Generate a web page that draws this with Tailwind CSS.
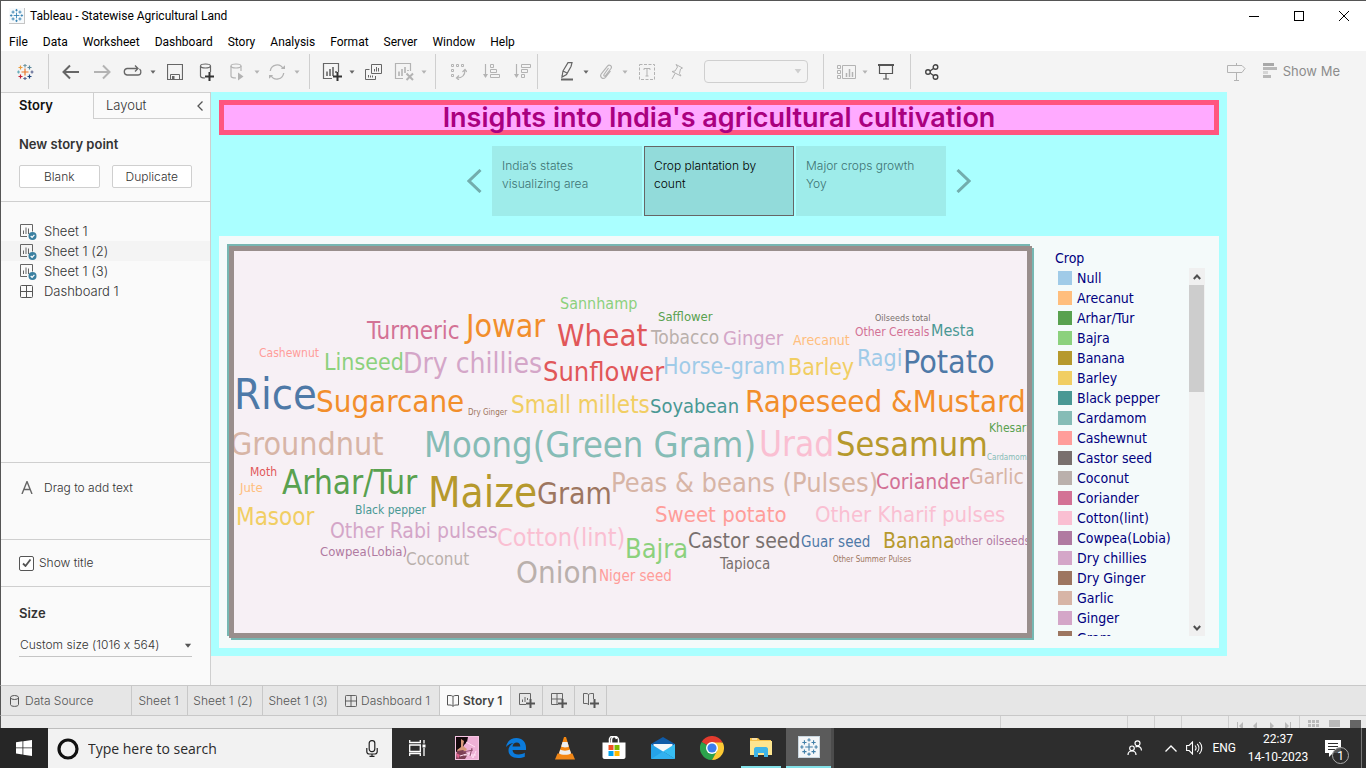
<!DOCTYPE html>
<html lang="en">
<head>
<meta charset="utf-8">
<meta name="viewport" content="width=device-width, initial-scale=1">
<title>Tableau - Statewise Agricultural Land</title>
<script src="https://cdn.jsdelivr.net/npm/@tailwindcss/browser@4"></script>
</head>
<body class="flex h-screen flex-col overflow-hidden bg-[#f4f4f4] font-[Inter,'Liberation_Sans',sans-serif] text-xs font-light text-[#333] [font-feature-settings:'calt'_0]">

<svg class="hidden">
  <defs>
    <g id="plus9"><path d="M3.500 0h2v3.500h3.500v2h-3.500v3.500h-2v-3.500h-3.500v-2h3.500z"/></g>
    <symbol id="caret" viewBox="0 0 6 4"><path d="M0.500 0.500h5L3 3.800z" fill="currentColor"/></symbol>
    <symbol id="sheet" viewBox="1 0 17 16"><path d="M8 12.500H1.500V.5h12v7M4.500 10V6.500M7 10V3.500M9.500 10V4.500" fill="none" stroke="#666"/><circle cx="13.500" cy="12" r="4" fill="#3a7fa0"/><path d="M11.700 12l1.400 1.400 2.300-2.500" fill="none" stroke="#fff" stroke-width="1.200"/></symbol>
    <symbol id="dash" viewBox="0 0 13 13"><rect x=".5" y=".5" width="12" height="12" rx="1" fill="none" stroke="#555"/><path d="M6.500 0v13M0 6.500h13" stroke="#555"/></symbol>
    <symbol id="book" viewBox="0 0 12 13"><path d="M.5 1.500v9.500h2.500c2 0 3 1.200 3 1.500c0-.3 1-1.500 3-1.500h2.500V1.500H9c-2 0-3 .7-3 1.500c0-.8-1-1.500-3-1.500zM6 3v9" fill="none" stroke="#555"/></symbol>
    <symbol id="tabmark" viewBox="0 0 24 24"><path d="M12 7.500v9M7.500 12h9M12 1.500v4M10 3.500h4M12 18.500v4M10 20.500h4M1.500 12h4M3.500 10v4M18.500 12h4M20.500 10v4M6.500 4v5M4 6.500h5M17.500 4v5M15 6.500h5M6.500 15v5M4 17.500h5M17.500 15v5M15 17.500h5" stroke="currentColor" fill="none" stroke-width="1.300"/></symbol>
  </defs>
</svg>

<!-- Title bar -->
<header class="flex h-[30px] shrink-0 items-center border-t border-l border-[#555] bg-white pl-2 font-[Roboto,'Noto_Sans',sans-serif] font-normal text-black">
  <svg class="size-4 border-r border-b border-[#c5c5c5] bg-[#f7fafc] text-[#2a7aae]"><use href="#tabmark"/></svg>
  <h1 class="ml-[5px] flex-1 text-xs">Tableau - Statewise Agricultural Land</h1>
  <button aria-label="Minimize" class="flex h-full w-[45px] items-center justify-center"><svg class="h-[10px] w-[10px]" viewBox="0 0 10 10"><path d="M0 5.500h10" stroke="#000"/></svg></button>
  <button aria-label="Maximize" class="flex h-full w-[45px] items-center justify-center"><svg class="h-[10px] w-[10px]" viewBox="0 0 10 10"><rect x=".5" y=".5" width="9" height="9" fill="none" stroke="#000"/></svg></button>
  <button aria-label="Close" class="flex h-full w-[45px] items-center justify-center"><svg class="h-[10px] w-[10px]" viewBox="0 0 10 10"><path d="M0 0l10 10M10 0L0 10" stroke="#000"/></svg></button>
</header>

<!-- Menu bar -->
<nav class="flex h-[21px] shrink-0 items-center gap-[15px] border-l border-[#555] bg-white pt-0.5 pl-2 font-[Roboto,'Noto_Sans',sans-serif] text-xs font-normal text-black">
  <button>File</button><button>Data</button><button>Worksheet</button><button>Dashboard</button><button>Story</button><button>Analysis</button><button>Format</button><button>Server</button><button>Window</button><button>Help</button>
</nav>

<!-- Toolbar -->
<div role="toolbar" class="flex h-[41px] shrink-0 items-center border-l border-[#555] bg-[#f4f4f4] text-[#666]">
  <button aria-label="Start page" class="flex w-[47px] justify-center">
    <svg class="size-[18px]" viewBox="0 0 18 18" fill="none" stroke-width="1.200"><path d="M9 5.500v7M5.500 9h7" stroke="#e8762c"/><path d="M9 1v3.500M7.300 2.500h3.400" stroke="#7199a6"/><path d="M9 14v3M7.300 15.500h3.400" stroke="#5c6692"/><path d="M1 9h3M2.500 7.500v3" stroke="#6aaebb"/><path d="M14.500 9h3M16 7.500v3" stroke="#5c6692"/><path d="M4.500 2.500v4M2.500 4.500h4" stroke="#eb9d3c"/><path d="M13.500 2.500v4M11.500 4.500h4" stroke="#59879b"/><path d="M4.500 11.500v4M2.500 13.500h4" stroke="#c72035"/><path d="M13.500 11.500v4M11.500 13.500h4" stroke="#1f457e"/></svg>
  </button>
  <div class="mr-[5px] h-[35px] w-px bg-[#cfcfcf]"></div>
  <button aria-label="Undo" class="flex w-8 justify-center"><svg class="h-4 w-[17px]" viewBox="0 0 17 16" fill="none" stroke="currentColor" stroke-width="2"><path d="M1.500 8H17M8 1.500L1.500 8L8 14.500"/></svg></button>
  <button aria-label="Redo" class="flex w-8 justify-center text-[#b3b3b3]"><svg class="h-4 w-[17px]" viewBox="0 0 17 16" fill="none" stroke="currentColor" stroke-width="2"><path d="M0 8h15.500M9 1.500L15.500 8L9 14.500"/></svg></button>
  <button aria-label="Replay" class="flex w-[29px] justify-center"><svg class="h-4 w-[19px]" viewBox="0 0 19 16" fill="none" stroke="currentColor" stroke-width="1.300"><path d="M7 11H4a3.300 3.300 0 0 1 0-6.500H14M12 1.500l3 3l-3 3M16.500 5c2.200 1.500 1.800 6-1.500 6H7"/></svg></button>
  <button aria-label="Replay options" class="flex w-3 justify-center"><svg class="h-1 w-1.5"><use href="#caret"/></svg></button>
  <button aria-label="Save" class="flex w-8 justify-center"><svg class="size-4" viewBox="0 0 16 16" fill="none" stroke="currentColor"><path d="M.5.5h15v15H.5z" stroke-width="1.200"/><path d="M3.500 15V10.500h9V15"/><path d="M5 12h2.500v3.500H5z" fill="currentColor" stroke="none"/></svg></button>
  <button aria-label="New data source" class="flex w-[30px] justify-center"><svg class="h-[18px] w-4" viewBox="0 0 16 18" fill="none" stroke="currentColor" stroke-width="1.200"><ellipse cx="7.500" cy="3" rx="5" ry="2"/><path d="M2.500 3v10c0 1.300 2 2 4.500 2M12.500 3v6"/><use href="#plus9" transform="translate(7,9)" fill="#333" stroke="none"/></svg></button>
  <button aria-label="Pause updates" class="flex w-8 justify-center text-[#b3b3b3]"><svg class="h-[18px] w-4" viewBox="0 0 16 18" fill="none" stroke="currentColor" stroke-width="1.200"><ellipse cx="7" cy="3" rx="5" ry="2"/><path d="M2 3v10c0 1.300 2 2 5 2M12 3v5"/><path d="M9 9.500l5.500 4L9 17.500z" fill="currentColor" stroke="none"/></svg></button>
  <button aria-label="Pause options" class="flex w-2 justify-center text-[#b3b3b3]"><svg class="h-1 w-1.5"><use href="#caret"/></svg></button>
  <button aria-label="Refresh" class="flex w-8 justify-center text-[#b3b3b3]"><svg class="h-4 w-[18px]" viewBox="0 0 18 16" fill="none" stroke="currentColor" stroke-width="1.300"><path d="M2.300 7a6.800 6.800 0 0 1 12.700-2.500M15.700 9A6.800 6.800 0 0 1 3 11.500"/><path d="M12.800 5h4.200V1.200zM5.200 11H1v3.800z" fill="currentColor" stroke="none"/></svg></button>
  <button aria-label="Refresh options" class="flex w-2 justify-center text-[#b3b3b3]"><svg class="h-1 w-1.5"><use href="#caret"/></svg></button>
  <div class="mr-1.5 ml-2 h-[35px] w-px bg-[#cfcfcf]"></div>
  <button aria-label="New worksheet" class="flex w-8 justify-center"><svg class="h-[18px] w-[20px]" viewBox="0 0 20 18" fill="none" stroke="currentColor"><path d="M10 15.500H1.500v-15h15V9" stroke-width="1.200"/><path d="M5 13V8.500M8 13V6M11 13V4M14 10V8" stroke-width="1.600"/><use href="#plus9" transform="translate(11,9)" fill="#333" stroke="none"/></svg></button>
  <button aria-label="Worksheet options" class="flex w-2 justify-center"><svg class="h-1 w-1.5"><use href="#caret"/></svg></button>
  <button aria-label="Duplicate sheet" class="flex w-[34px] justify-center"><svg class="h-4 w-[17px]" viewBox="0 0 17 16" fill="none" stroke="currentColor"><path d="M6.500.5h10v9h-10zM4.500 5.500h-4v10h10v-3.500M3.500 13.500V11M5.500 13.500v-2M7.500 13.500v-2M9.500 7.500V5M11.500 7.500V3M13.500 7.500V4"/></svg></button>
  <button aria-label="Clear sheet" class="flex w-7 justify-center text-[#b3b3b3]"><svg class="h-[18px] w-[20px]" viewBox="0 0 20 18" fill="none" stroke="currentColor"><path d="M9 15.500H1.500v-15h15V8" stroke-width="1.200"/><path d="M5 13V8.500M8 13V6M11 10V4M14 8V7" stroke-width="1.600"/><path d="M12.500 10.500l6.500 6.500M19 10.500l-6.500 6.500" stroke-width="2"/></svg></button>
  <button aria-label="Clear options" class="flex w-[11px] justify-center text-[#b3b3b3]"><svg class="h-1 w-1.5"><use href="#caret"/></svg></button>
  <div class="mr-1.5 ml-1.5 h-[35px] w-px bg-[#cfcfcf]"></div>
  <button aria-label="Swap rows and columns" class="flex w-8 justify-center text-[#b3b3b3]"><svg class="size-[17px]" viewBox="0 0 17 17" fill="none" stroke="currentColor"><path d="M1.500 1.500h2v2h-2zM6.500 1.500h2v2h-2zM11.500 1.500h2v2h-2zM1.500 6.500h2v2h-2zM1.500 11.500h2v2h-2z" /><path d="M15 7c0 5-2.500 8-8 8M12.500 9L15 6.500L17 9M9 12.500L6.500 15L9 17" stroke-width="1.200"/></svg></button>
  <button aria-label="Sort ascending" class="flex w-[34px] justify-center text-[#b3b3b3]"><svg class="size-[17px]" viewBox="0 0 17 17" fill="none" stroke="currentColor"><path d="M2.500 1v13" stroke-width="1.200"/><path d="M0 11h5l-2.500 4z" fill="currentColor" stroke="none"/><path d="M7.500 1.500h3v3h-3zM7.500 6.500h6v3h-6zM7.500 11.500h9v3h-9z"/></svg></button>
  <button aria-label="Sort descending" class="flex w-[29px] justify-center text-[#b3b3b3]"><svg class="size-[17px]" viewBox="0 0 17 17" fill="none" stroke="currentColor"><path d="M2.500 1v13" stroke-width="1.200"/><path d="M0 11h5l-2.500 4z" fill="currentColor" stroke="none"/><path d="M7.500 1.500h9v3h-9zM7.500 6.500h6v3h-6zM7.500 11.500h3v3h-3z"/></svg></button>
  <div class="mr-[13px] h-[35px] w-px bg-[#cfcfcf]"></div>
  <button aria-label="Highlight" class="flex w-[31px] justify-center"><svg class="h-[19px] w-[14px]" viewBox="0 0 14 19" fill="none" stroke="currentColor" stroke-width="1.200"><path d="M3 9l5-8.300h4L11 4.500L6.500 12.500L2 15zM3 9l4 2M1.500 13.500l2 1"/><path d="M1 17.500h12" stroke-width="2"/></svg></button>
  <button aria-label="Highlight options" class="flex w-2 justify-center"><svg class="h-1 w-1.5"><use href="#caret"/></svg></button>
  <button aria-label="Group members" class="flex w-[31px] justify-center text-[#b3b3b3]"><svg class="size-4" viewBox="0 0 16 16" fill="none" stroke="currentColor"><path d="M10.500 4L6 10.500c-.8 1.200.8 2.200 1.600 1L13 4.500c1.500-2.300-1.800-4.700-3.500-2.300L3.500 9.500c-2.500 3.500 1.500 6.500 4 3.800L12.500 7" stroke-width="1.200"/></svg></button>
  <button aria-label="Group options" class="flex w-2 justify-center text-[#b3b3b3]"><svg class="h-1 w-1.5"><use href="#caret"/></svg></button>
  <button aria-label="Show mark labels" class="flex w-9 justify-center text-[#b3b3b3]"><svg class="size-4" viewBox="0 0 16 16" fill="none" stroke="currentColor"><rect x=".5" y=".5" width="15" height="15" stroke-dasharray="3 1.500"/><path d="M5 6V4.500h6V6M8 4.500v7.500M6.500 12h3"/></svg></button>
  <button aria-label="Fix axes" class="flex w-6 justify-center text-[#b3b3b3]"><svg class="size-4" viewBox="0 0 16 16" fill="none" stroke="currentColor"><path d="M7 .5l6.500 3.500l-2 1l-1 4.500l1.500 2.500l-9-4.500l3-.5l2.500-4zM6 9.500l-3 5.500"/></svg></button>
  <label class="relative ml-[15px] block"><span class="sr-only">Fit</span><select class="block h-[23px] w-[104px] appearance-none rounded-sm border border-[#cfcfcf]"><option></option></select><svg class="absolute top-2 right-1.5 h-[6px] w-2 text-[#cfcfcf]"><use href="#caret"/></svg></label>
  <div class="mr-1.5 ml-[15px] h-[35px] w-px bg-[#cfcfcf]"></div>
  <button aria-label="Show cards" class="flex w-8 justify-center text-[#b3b3b3]"><svg class="h-4 w-[19px]" viewBox="0 0 19 16" fill="none" stroke="currentColor"><path d="M.5 1.500h3v3h-3zM.5 6.500h3v3h-3zM.5 11.500h3v3h-3zM5.500 1.500h13v13h-13z"/><path d="M9.500 13V9M12.500 13V5M15.500 13V8" stroke-width="1.500"/></svg></button>
  <button aria-label="Card options" class="flex w-1.5 justify-center text-[#b3b3b3]"><svg class="h-1 w-1.5"><use href="#caret"/></svg></button>
  <button aria-label="Presentation mode" class="flex w-9 justify-center text-[#555]"><svg class="h-[17px] w-4" viewBox="0 0 16 17" fill="none" stroke="currentColor"><path d="M0 2h16" stroke-width="2"/><path d="M1.500 2v8.500h13V2M8 10.500V16M5 16h6" stroke-width="1.200"/></svg></button>
  <div class="mr-1.5 ml-1.5 h-[35px] w-px bg-[#cfcfcf]"></div>
  <button aria-label="Share" class="flex w-[30px] justify-center text-[#444]"><svg class="size-4" viewBox="0 0 16 16" fill="none" stroke="currentColor" stroke-width="1.400"><circle cx="4" cy="8" r="2.300"/><circle cx="11.500" cy="3" r="2.300"/><circle cx="11.500" cy="13" r="2.300"/><path d="M6 7l3.500-2.500M6 9l3.500 2.500"/></svg></button>
  <button aria-label="Data guide" class="ml-auto flex w-9 justify-center text-[#b3b3b3]"><svg class="h-[19px] w-[19px]" viewBox="0 0 19 19" fill="none" stroke="currentColor"><path d="M.5 3.500H15L18 6.500L15 10.500H.5zM9.500 1v2.500M9.500 10.500V18M7 18.500h5"/></svg></button>
  <button class="mr-[26px] ml-2 flex items-center gap-[5px] text-[13px] font-normal text-[#8c8c8c]"><svg class="h-4 w-[15px]" viewBox="0 0 15 16" fill="#b8b8b8"><path d="M0 0h11v3H0z" fill="#a8a8a8"/><path d="M0 4h14v3H0z"/><path d="M0 8h5v3H0z" fill="#d5d5d5"/><path d="M0 12h8v3H0z"/></svg>Show Me</button>
</div>

<!-- Workspace -->
<div class="flex min-h-0 flex-1 border-l border-[#555]">
  <aside class="flex w-[210px] shrink-0 flex-col border-t border-r border-[#cfcfcf] bg-[#fafafa]">
    <div class="flex h-[26px] shrink-0 text-[13px]">
      <button class="w-[92px] pr-[22px] font-semibold text-[#111]">Story</button>
      <div class="flex flex-1 items-center border-b border-l border-[#cfcfcf] pr-[7px] pl-3"><button class="flex-1 text-left">Layout</button><button aria-label="Collapse pane"><svg class="h-[10px] w-1.5" viewBox="0 0 6 10"><path d="M5.500.5L1 5l4.500 4.500" fill="none" stroke="#555" stroke-width="1.300"/></svg></button></div>
    </div>
    <section class="h-[83px] shrink-0 border-b border-[#cfcfcf] pt-4 pr-[18px] pl-[18px]">
      <h2 class="text-[13px] leading-[18px] font-semibold text-[#333]">New story point</h2>
      <div class="mt-3 flex gap-3">
        <button class="h-[23px] flex-1 rounded-xs border border-[#cfcfcf] bg-white">Blank</button>
        <button class="h-[23px] flex-1 rounded-xs border border-[#cfcfcf] bg-white">Duplicate</button>
      </div>
    </section>
    <ul class="min-h-0 flex-1 pt-[19px] text-[13px]">
      <li class="flex h-5 items-center gap-[7px] pt-px pl-[19px]"><svg class="h-4 w-[17px]"><use href="#sheet"/></svg>Sheet 1</li>
      <li class="flex h-5 items-center gap-[7px] bg-[#f4f4f4] pt-px pl-[19px]"><svg class="h-4 w-[17px]"><use href="#sheet"/></svg>Sheet 1 (2)</li>
      <li class="flex h-5 items-center gap-[7px] pt-px pl-[19px]"><svg class="h-4 w-[17px]"><use href="#sheet"/></svg>Sheet 1 (3)</li>
      <li class="flex h-5 items-center gap-[11px] pt-px pl-[19px]"><svg class="size-[13px]"><use href="#dash"/></svg>Dashboard 1</li>
    </ul>
    <section class="flex h-[77px] shrink-0 border-t border-[#cfcfcf] pt-4 pl-5"><svg class="mt-0.5 h-[13px] w-3" viewBox="0 0 12 13"><path d="M1 13L6 .5L11 13M3 8.500h6" fill="none" stroke="#666" stroke-width="1.400"/></svg><span class="ml-[11px] leading-[18px]">Drag to add text</span></section>
    <section class="flex h-[47px] shrink-0 items-center border-t border-[#cfcfcf] pl-[18px]">
      <label class="relative flex items-center gap-[5px]"><input type="checkbox" checked class="size-[15px] appearance-none rounded-xs border border-[#555] bg-white"><svg class="absolute left-[3px] h-2 w-2.5" viewBox="0 0 10 8"><path d="M1 4.500l2.500 2.500L8.500.5" fill="none" stroke="#555" stroke-width="1.800"/></svg>Show title</label>
    </section>
    <section class="h-[99px] shrink-0 border-t border-[#cfcfcf] pt-[17px] pr-[18px] pl-[18px]">
      <h2 class="text-[13px] leading-[18px] font-semibold text-[#333]">Size</h2>
      <label class="relative mt-[11px] block"><span class="sr-only">Story size</span><select class="block h-6 w-full appearance-none border-b border-[#c5c5c5] pl-px"><option>Custom size (1016 x 564)</option></select><svg class="absolute top-[10px] right-0 h-[5px] w-2 text-[#555]"><use href="#caret"/></svg></label>
    </section>
  </aside>

  <main class="min-w-0 flex-1">
    <div class="flex h-[564px] w-[1016px] flex-col bg-[#aaffff] p-2">
      <h2 class="flex h-[35px] shrink-0 items-center justify-center border-[5px] border-[#ff557f] bg-[#ffaaff] text-[27px] font-semibold text-[#aa007f]">Insights into India's agricultural cultivation</h2>
      <div class="mt-[11px] flex h-[70px] shrink-0 items-center justify-center gap-2.5 leading-[18px] text-[#3d7373]">
        <button aria-label="Previous story point"><svg class="h-6 w-[15px]" viewBox="0 0 15 24"><path d="M13.500 1L2 12l11.500 11" fill="none" stroke="#72adad" stroke-width="3"/></svg></button>
        <div class="flex h-full gap-0.5">
          <button class="flex w-[150px] items-start bg-[#9eecea] px-2.5 pt-[11px] text-left">India’s states visualizing area</button>
          <button class="flex w-[150px] items-start border border-[#666] bg-[#92dbda] px-[9px] pt-2.5 text-left text-black">Crop plantation by count</button>
          <button class="flex w-[150px] items-start bg-[#9eecea] px-2.5 pt-[11px] text-left">Major crops growth Yoy</button>
        </div>
        <button aria-label="Next story point"><svg class="h-6 w-[15px]" viewBox="0 0 15 24"><path d="M1.500 1L13 12L1.500 23" fill="none" stroke="#72adad" stroke-width="3"/></svg></button>
      </div>
      <div class="mt-5 flex min-h-0 flex-1 bg-[#f4fafa] py-2.5 pl-2.5 font-['DejaVu_Sans_Condensed','Noto_Sans',sans-serif] font-normal">
        <div class="w-[803px] shrink-0 border-[5px] border-[#998e8c] bg-[#f7f0f5] shadow-[-2px_-2px_0_#76b7b2,2px_2px_0_#76b7b2]">
          <svg class="size-full overflow-hidden" role="img" aria-label="Crop word cloud"><g transform="translate(-234,-251)">
            <text x="560" y="309" class="fill-[#8cd17d] text-[16px]">Sannhamp</text>
            <text x="466" y="337" class="fill-[#f28e2b] text-[32px]">Jowar</text>
            <text x="367" y="339" class="fill-[#d37295] text-[24px]">Turmeric</text>
            <text x="557" y="346" class="fill-[#e15759] text-[31px]">Wheat</text>
            <text x="658" y="321" class="fill-[#59a14f] text-[13px]">Safflower</text>
            <text x="651" y="344" class="fill-[#bab0ac] text-[19px]">Tobacco</text>
            <text x="723" y="345" class="fill-[#d4a6c8] text-[20px]">Ginger</text>
            <text x="793" y="345" class="fill-[#ffbe7d] text-[14px]">Arecanut</text>
            <text x="875" y="321" class="fill-[#79706e] text-[9px]">Oilseeds total</text>
            <text x="855" y="336" class="fill-[#d37295] text-[12px]">Other Cereals</text>
            <text x="931" y="336" class="fill-[#499894] text-[16px]">Mesta</text>
            <text x="259" y="357" class="fill-[#ff9d9a] text-[12px]">Cashewnut</text>
            <text x="324" y="370" class="fill-[#8cd17d] text-[23px]">Linseed</text>
            <text x="403" y="373" class="fill-[#d4a6c8] text-[28px]">Dry chillies</text>
            <text x="543" y="381" class="fill-[#e15759] text-[27px]">Sunflower</text>
            <text x="663" y="374" class="fill-[#a0cbe8] text-[23px]">Horse-gram</text>
            <text x="788" y="375" class="fill-[#f1ce63] text-[23px]">Barley</text>
            <text x="857" y="366" class="fill-[#a0cbe8] text-[23px]">Ragi</text>
            <text x="903" y="373" class="fill-[#4e79a7] text-[32px]">Potato</text>
            <text x="234" y="409" class="fill-[#4e79a7] text-[43px]">Rice</text>
            <text x="316" y="412" class="fill-[#f28e2b] text-[31px]">Sugarcane</text>
            <text x="468" y="415" class="fill-[#9d7660] text-[8px]">Dry Ginger</text>
            <text x="511" y="413" class="fill-[#f1ce63] text-[24px]">Small millets</text>
            <text x="650" y="413" class="fill-[#499894] text-[20px]">Soyabean</text>
            <text x="745" y="412" class="fill-[#f28e2b] text-[31px]">Rapeseed &amp;Mustard</text>
            <text x="230" y="455" class="fill-[#d7b5a6] text-[32px]">Groundnut</text>
            <text x="424" y="457" class="fill-[#86bcb6] text-[36px]">Moong(Green Gram)</text>
            <text x="759" y="456" class="fill-[#fabfd2] text-[35px]">Urad</text>
            <text x="836" y="456" class="fill-[#b6992d] text-[34px]">Sesamum</text>
            <text x="989" y="432" class="fill-[#59a14f] text-[12px]">Khesari</text>
            <text x="987" y="460" class="fill-[#86bcb6] text-[8px]">Cardamom</text>
            <text x="250" y="476" class="fill-[#e15759] text-[12px]">Moth</text>
            <text x="240" y="492" class="fill-[#ffbe7d] text-[13px]">Jute</text>
            <text x="282" y="494" class="fill-[#59a14f] text-[33px]">Arhar/Tur</text>
            <text x="428" y="507" class="fill-[#b6992d] text-[42px]">Maize</text>
            <text x="537" y="504" class="fill-[#9d7660] text-[30px]">Gram</text>
            <text x="611" y="492" class="fill-[#d7b5a6] text-[27px]">Peas &amp; beans (Pulses)</text>
            <text x="876" y="489" class="fill-[#d37295] text-[21px]">Coriander</text>
            <text x="969" y="484" class="fill-[#d7b5a6] text-[21px]">Garlic</text>
            <text x="236" y="525" class="fill-[#f1ce63] text-[24px]">Masoor</text>
            <text x="355" y="514" class="fill-[#499894] text-[12px]">Black pepper</text>
            <text x="330" y="538" class="fill-[#d4a6c8] text-[21px]">Other Rabi pulses</text>
            <text x="497" y="546" class="fill-[#fabfd2] text-[25px]">Cotton(lint)</text>
            <text x="655" y="522" class="fill-[#ff9d9a] text-[22px]">Sweet potato</text>
            <text x="815" y="522" class="fill-[#fabfd2] text-[22px]">Other Kharif pulses</text>
            <text x="320" y="556" class="fill-[#b07aa1] text-[13px]">Cowpea(Lobia)</text>
            <text x="406" y="565" class="fill-[#bab0ac] text-[17px]">Coconut</text>
            <text x="516" y="583" class="fill-[#bab0ac] text-[31px]">Onion</text>
            <text x="599" y="581" class="fill-[#ff9d9a] text-[15px]">Niger seed</text>
            <text x="625" y="558" class="fill-[#8cd17d] text-[27px]">Bajra</text>
            <text x="688" y="548" class="fill-[#79706e] text-[21px]">Castor seed</text>
            <text x="801" y="547" class="fill-[#4e79a7] text-[15px]">Guar seed</text>
            <text x="883" y="548" class="fill-[#b6992d] text-[21px]">Banana</text>
            <text x="954" y="545" class="fill-[#b07aa1] text-[12px]">other oilseeds</text>
            <text x="720" y="569" class="fill-[#79706e] text-[15px]">Tapioca</text>
            <text x="833" y="562" class="fill-[#9d7660] text-[8px]">Other Summer Pulses</text>
          </g></svg>
        </div>
        <div class="ml-[23px] flex w-[150px] flex-col text-sm text-[#00007f]">
          <h3 class="h-[22px] shrink-0 leading-6">Crop</h3>
          <div class="mb-0.5 flex min-h-0 flex-1 justify-between">
            <ul class="overflow-hidden pl-[3px]">
              <li class="flex h-5 items-center gap-[5px]"><span class="size-[14px] bg-[#a0cbe8]"></span>Null</li>
              <li class="flex h-5 items-center gap-[5px]"><span class="size-[14px] bg-[#ffbe7d]"></span>Arecanut</li>
              <li class="flex h-5 items-center gap-[5px]"><span class="size-[14px] bg-[#59a14f]"></span>Arhar/Tur</li>
              <li class="flex h-5 items-center gap-[5px]"><span class="size-[14px] bg-[#8cd17d]"></span>Bajra</li>
              <li class="flex h-5 items-center gap-[5px]"><span class="size-[14px] bg-[#b6992d]"></span>Banana</li>
              <li class="flex h-5 items-center gap-[5px]"><span class="size-[14px] bg-[#f1ce63]"></span>Barley</li>
              <li class="flex h-5 items-center gap-[5px]"><span class="size-[14px] bg-[#499894]"></span>Black pepper</li>
              <li class="flex h-5 items-center gap-[5px]"><span class="size-[14px] bg-[#86bcb6]"></span>Cardamom</li>
              <li class="flex h-5 items-center gap-[5px]"><span class="size-[14px] bg-[#ff9d9a]"></span>Cashewnut</li>
              <li class="flex h-5 items-center gap-[5px]"><span class="size-[14px] bg-[#79706e]"></span>Castor seed</li>
              <li class="flex h-5 items-center gap-[5px]"><span class="size-[14px] bg-[#bab0ac]"></span>Coconut</li>
              <li class="flex h-5 items-center gap-[5px]"><span class="size-[14px] bg-[#d37295]"></span>Coriander</li>
              <li class="flex h-5 items-center gap-[5px]"><span class="size-[14px] bg-[#fabfd2]"></span>Cotton(lint)</li>
              <li class="flex h-5 items-center gap-[5px]"><span class="size-[14px] bg-[#b07aa1]"></span>Cowpea(Lobia)</li>
              <li class="flex h-5 items-center gap-[5px]"><span class="size-[14px] bg-[#d4a6c8]"></span>Dry chillies</li>
              <li class="flex h-5 items-center gap-[5px]"><span class="size-[14px] bg-[#9d7660]"></span>Dry Ginger</li>
              <li class="flex h-5 items-center gap-[5px]"><span class="size-[14px] bg-[#d7b5a6]"></span>Garlic</li>
              <li class="flex h-5 items-center gap-[5px]"><span class="size-[14px] bg-[#d4a6c8]"></span>Ginger</li>
              <li class="flex h-5 items-center gap-[5px]"><span class="size-[14px] bg-[#9d7660]"></span>Gram</li>
            </ul>
            <div class="flex w-4 shrink-0 flex-col items-center bg-[#f0f0f0]">
              <svg class="h-[17px] w-2 shrink-0" viewBox="0 0 8 17"><path d="M.8 11L4 7.500L7.200 11" fill="none" stroke="#505050" stroke-width="2"/></svg>
              <div class="h-[107px] w-full border-r border-[#f0f0f0] bg-[#cdcdcd]"></div>
              <svg class="mt-auto h-[17px] w-2 shrink-0" viewBox="0 0 8 17"><path d="M.8 7L4 10.500L7.200 7" fill="none" stroke="#505050" stroke-width="2"/></svg>
            </div>
          </div>
        </div>
      </div>
    </div>
  </main>
</div>

<!-- Sheet tabs -->
<nav class="flex h-[31px] shrink-0 border-y border-l border-y-[#c8c8c8] border-l-[#555] bg-[#e6e6e6] text-[#555]">
  <button class="flex w-[131px] items-center gap-1.5 border-r border-[#c8c8c8] pl-[9px]"><svg class="h-3 w-[9px]" viewBox="0 0 9 12" fill="none" stroke="#555"><ellipse cx="4.500" cy="2.500" rx="4" ry="2"/><path d="M.5 2.500v7c0 2.500 8 2.500 8 0v-7"/></svg>Data Source</button>
  <button class="w-14 border-r border-[#c8c8c8] pr-0.5">Sheet 1</button>
  <button class="w-[75px] border-r border-[#c8c8c8] pr-1">Sheet 1 (2)</button>
  <button class="w-[75px] border-r border-[#c8c8c8] pr-1">Sheet 1 (3)</button>
  <button class="flex w-[102px] items-center gap-1 border-r border-[#c8c8c8] pl-[7px]"><svg class="size-3"><use href="#dash"/></svg>Dashboard 1</button>
  <button class="flex w-[71px] items-center gap-1 border-r border-[#c8c8c8] bg-[#fafafa] pl-[7px] font-semibold text-[#444]"><svg class="h-[13px] w-3"><use href="#book"/></svg>Story 1</button>
  <button aria-label="New worksheet" class="flex w-8 items-center justify-center border-r border-[#c8c8c8]"><svg class="h-[15px] w-4" viewBox="0 0 16 15" fill="none" stroke="#666"><path d="M7 11.500H.5V.5h11V6M3.500 9V6.500M6 9V4M8.500 7V5"/><use href="#plus9" transform="translate(7,6)" fill="#555" stroke="none"/></svg></button>
  <button aria-label="New dashboard" class="flex w-8 items-center justify-center border-r border-[#c8c8c8]"><svg class="h-[15px] w-4" viewBox="0 0 16 15" fill="none" stroke="#666"><path d="M7 11.500H.5V.5h11V6M6 .5v11M.5 6h11"/><use href="#plus9" transform="translate(7,6)" fill="#555" stroke="none"/></svg></button>
  <button aria-label="New story" class="flex w-8 items-center justify-center border-r border-[#c8c8c8]"><svg class="h-[15px] w-4" viewBox="0 0 16 15" fill="none" stroke="#666"><path d="M.5.5v10H3c1.500 0 2.500.5 2.500 1.500V2C5.500 1 4.500.5 3 .5zM5.500 2C5.500 1 7 .5 8 .5h2.500V6"/><use href="#plus9" transform="translate(7,6)" fill="#555" stroke="none"/></svg></button>
</nav>

<!-- Status bar -->
<div class="flex h-3 shrink-0 items-start justify-end overflow-hidden border-l border-[#555] bg-[#ebebeb] text-[#bababa]">
  <div class="h-3 w-[127px] border-l border-[#cfcfcf]"></div>
  <div class="h-3 w-[27px] border-l border-[#cfcfcf]"></div>
  <div class="h-3 w-[27px] border-l border-[#cfcfcf]"></div>
  <div class="h-3 w-[47px] border-l border-[#cfcfcf]"></div>
  <div class="h-3 w-[71px] border-l border-[#cfcfcf] pt-1.5 pl-2"><svg class="h-2 w-[54px]" viewBox="0 0 54 8" fill="currentColor"><path d="M0 0h1v8H0zM6 0v8L2 4zM20 0v8l-4-4zM33 0v8l4-4zM48 0v8l4-4zM53 0h1v8h-1z"/></svg></div>
  <div class="h-3 w-[67px] border-l border-[#cfcfcf] pt-1 pl-2"><svg class="h-2 w-[53px]" viewBox="0 0 53 8"><path d="M0 0h3v3H0zM4 0h3v3H4zM8 0h3v3H8zM0 4h3v3H0zM4 4h3v3H4zM8 4h3v3H8zM21 0h11v7H21z" fill="#bababa"/><path d="M42 0h11v8H42z" fill="#666"/></svg></div>
</div>

<!-- Windows taskbar -->
<footer class="flex h-10 shrink-0 bg-[#2d2d2d] font-['Open_Sans','Noto_Sans',sans-serif] font-normal text-white">
  <button aria-label="Start" class="flex w-12 items-center justify-center bg-[#262626]"><svg class="size-4" viewBox="0 0 16 16" fill="#fff"><path d="M0 2.200l6.500-.9v6.200H0zM7.300 1.200L16 0v7.500H7.300zM0 8.300h6.500v6.200L0 13.600zM7.300 8.300H16V16l-8.700-1.200z"/></svg></button>
  <label class="flex w-[344px] items-center border-t border-[#bdbdbd] bg-[#f2f2f2] pr-3.5 pl-[9px]">
    <svg class="size-[22px] shrink-0" viewBox="0 0 22 22"><circle cx="11" cy="11" r="9" fill="none" stroke="#111" stroke-width="3.200"/></svg>
    <input aria-label="Search" placeholder="Type here to search" class="ml-[9px] min-w-0 flex-1 text-sm placeholder:text-[#2b2b2b]">
    <svg class="h-[17px] w-3" viewBox="0 0 12 17" fill="none" stroke="#222" stroke-width="1.200"><rect x="3.200" y=".6" width="5.600" height="11" rx="2.500"/><path d="M.8 8v3.500c0 1.500 1 2.500 2.500 2.500h5.400c1.500 0 2.500-1 2.500-2.500V8M6 14v2.500M3.500 16.400h5"/></svg>
  </label>
  <button aria-label="Task view" class="flex w-[50px] items-center justify-center"><svg class="h-4 w-[17px]" viewBox="0 0 17 16" fill="none" stroke="#fff" stroke-width="1.300"><path d="M.7 0v2.500h10.600V0M.7 5h10.600v6.500H.7zM.7 16v-2.500h10.600V16M15 0v3.500M15 8v8"/><path d="M13.500 4.500h3v3h-3z" fill="#fff" stroke="none"/></svg></button>
  <button aria-label="Photo app" class="flex w-[49px] items-center justify-center"><svg class="size-6" viewBox="0 0 24 24"><path d="M0 0h24v24H0z" fill="#eeb0d6"/><path d="M1 1h12l-1 5l-3 3l-2 5l-6 2z" fill="#15090d"/><path d="M6 3l3 2l-1 5l4 3l-3 4l-5 2l-2-5l4-3z" fill="#d99a7c"/><path d="M2 15l6-1l5 4l-3 5H1z" fill="#7d3f55"/><path d="M1 17l4 2l-2 4z" fill="#e0608c"/><path d="M11 6l9 5M5 20l10-3l3 5l3-7M9 19h12" stroke="#ffdff2" fill="none"/><path d="M8 16l10-2M17 12l-2 8" stroke="#91506f" fill="none"/><path d="M.5.5h23v23H.5z" fill="none" stroke="#f7c4e3"/></svg></button>
  <button aria-label="Edge" class="flex w-[49px] items-center justify-center"><svg class="size-5" viewBox="0 0 20 20"><path d="M0 9C1 3 5 0 10.500 0C16 0 20 4 20 9.500V12H6.500c.3 3 2.500 4.500 6 4.500c2.500 0 4.500-.7 6.300-1.700v4C17 19.600 14.500 20 12 20C6 20 2.500 17 2.500 12.500c0-3.500 2-6 5-7.500C4.500 5.300 2 6.500 0 9zM6.500 8.500h7.800C14.200 6 13 4.500 10.800 4.500C8.500 4.500 6.900 6 6.500 8.500z" fill="#0b7bdc"/></svg></button>
  <button aria-label="VLC" class="flex w-[49px] items-center justify-center"><svg class="h-[23px] w-5" viewBox="0 0 20 23"><path d="M2.500 16.500h15L20 22.500H0z" fill="#f08718"/><path d="M9 0h2l5.500 18c-1 2.500-12 2.500-13 0z" fill="#f5860f"/><path d="M7.500 5h5l1.300 4.500c-1.500 1.200-6 1.200-7.600 0zM5.200 12.500c2 1.500 7.600 1.500 9.600 0l1.200 3.700c-2 2-10 2-12 0z" fill="#eee"/></svg></button>
  <button aria-label="Microsoft Store" class="flex w-[49px] items-center justify-center"><svg class="h-6 w-6" viewBox="0 0 24 24"><path d="M7.500 7V4.500a3.500 3.500 0 0 1 7-1.500M9.500 7V4a3.500 3.500 0 0 1 7 0v3" fill="none" stroke="#fff" stroke-width="1.500"/><path d="M.5 6.500h23V21c0 1-1 2-2 2h-19c-1 0-2-1-2-2z" fill="#fff"/><path d="M6.500 9h5v5h-5z" fill="#f05125"/><path d="M12.500 9h5v5h-5z" fill="#7fba00"/><path d="M6.500 15h5v5h-5z" fill="#00a4ef"/><path d="M12.500 15h5v5h-5z" fill="#ffb900"/></svg></button>
  <button aria-label="Mail" class="flex w-[49px] items-center justify-center"><svg class="h-6 w-6" viewBox="0 0 24 24"><path d="M0 8L12 1l12 7v3H0z" fill="#0f5ba8"/><path d="M2.500 8h19v8h-19z" fill="#f4f7fa"/><path d="M0 8l24 15H1c-.6 0-1-.4-1-1z" fill="#25a2e8"/><path d="M24 8L12 15.500L24 23z" fill="#37bdf2"/><path d="M0 23L12 15.500L24 23z" fill="#32b1f0"/></svg></button>
  <button aria-label="Chrome" class="flex w-[49px] items-center justify-center"><svg class="size-6" viewBox="0 0 24 24"><path d="M12 12L1.600 6A12 12 0 0 1 22.400 6z" fill="#e33b2e"/><path d="M12 12L1.600 6A12 12 0 0 0 12 24l5.500-9z" fill="#2ba24c"/><path d="M12 6.500h10.700A12 12 0 0 1 12 24l5-9z" fill="#fcc934"/><circle cx="12" cy="12" r="6" fill="#fff"/><circle cx="12" cy="12" r="4.600" fill="#3b7ded"/></svg></button>
  <button aria-label="File Explorer" class="flex w-[49px] flex-col items-center"><svg class="mt-[9px] h-5 w-[22px] shrink-0" viewBox="0 0 22 20"><path d="M0 1h8l2 2h11v15H0z" fill="#f5c14a"/><path d="M0 4h22v14H0z" fill="#fde58f"/><path d="M2 1.500h5v1H2z" fill="#fff"/><path d="M4 20v-8c0-1 1-2 2-2h10c1 0 2 1 2 2v8h-4v-4H8v4z" fill="#3eb5e8"/></svg><span class="mt-auto h-0.5 w-10 bg-[#83e1e8]"></span></button>
  <button aria-label="Tableau" class="ml-px flex w-12 flex-col items-center border-r-[3px] border-[#4c4c4c] bg-[#5b5b5b]"><svg class="mt-2 size-[22px] shrink-0 border border-[#c9d6df] bg-[#f4f6f8] text-[#417fa8]"><use href="#tabmark"/></svg><span class="mt-auto h-0.5 w-full bg-[#83e1e8]"></span></button>

  <div class="ml-auto flex items-center font-[Roboto,'Noto_Sans',sans-serif] text-xs">
    <button aria-label="People"><svg class="size-4" viewBox="0 0 16 16" fill="none" stroke="#fff" stroke-width="1.200"><circle cx="10.500" cy="3.300" r="2.500"/><circle cx="5" cy="8.300" r="2.300"/><path d="M1 15c0-2.500 1.500-4 4-4s4 1.500 4 4M8.500 7c3-1.500 6 0 6 3.500"/></svg></button>
    <button aria-label="Show hidden icons" class="ml-[22px]"><svg class="h-[7px] w-3" viewBox="0 0 12 7"><path d="M.5 6.500L6 1l5.500 5.500" fill="none" stroke="#fff" stroke-width="1.300"/></svg></button>
    <button aria-label="Volume" class="ml-[9px]"><svg class="h-[14px] w-[17px]" viewBox="0 0 17 14" fill="none" stroke="#fff" stroke-width="1.100"><path d="M.6 4.500h2.500L6.500 1v12L3.100 9.500H.6zM9 4.500c1.300 1.500 1.300 3.500 0 5M11.200 2.800c2.200 2.500 2.200 6 0 8.400M13.400 1c3.200 3.500 3.200 8.500 0 12"/></svg></button>
    <button class="ml-[9px]">ENG</button>
    <button class="w-[84px] pb-px text-center leading-[18px]">22:37<br>14-10-2023</button>
    <button aria-label="Notifications" class="mt-2 ml-[5px]"><svg class="size-6" viewBox="0 0 24 24"><path d="M0 0h16v13H8l-4 4v-4H0z" fill="#fff"/><path d="M3 3.500h10M3 6.500h10M3 9.500h7" stroke="#2d2d2d"/><circle cx="15.500" cy="15.500" r="8" fill="#2d2d2d" fill-opacity=".8" stroke="#aaa"/><text x="15.500" y="20" text-anchor="middle" fill="#fff" font-size="12">1</text></svg></button>
    <div class="ml-[12px] h-10 w-[5px] border-l border-[#777]"></div>
  </div>
</footer>
</body>
</html>
